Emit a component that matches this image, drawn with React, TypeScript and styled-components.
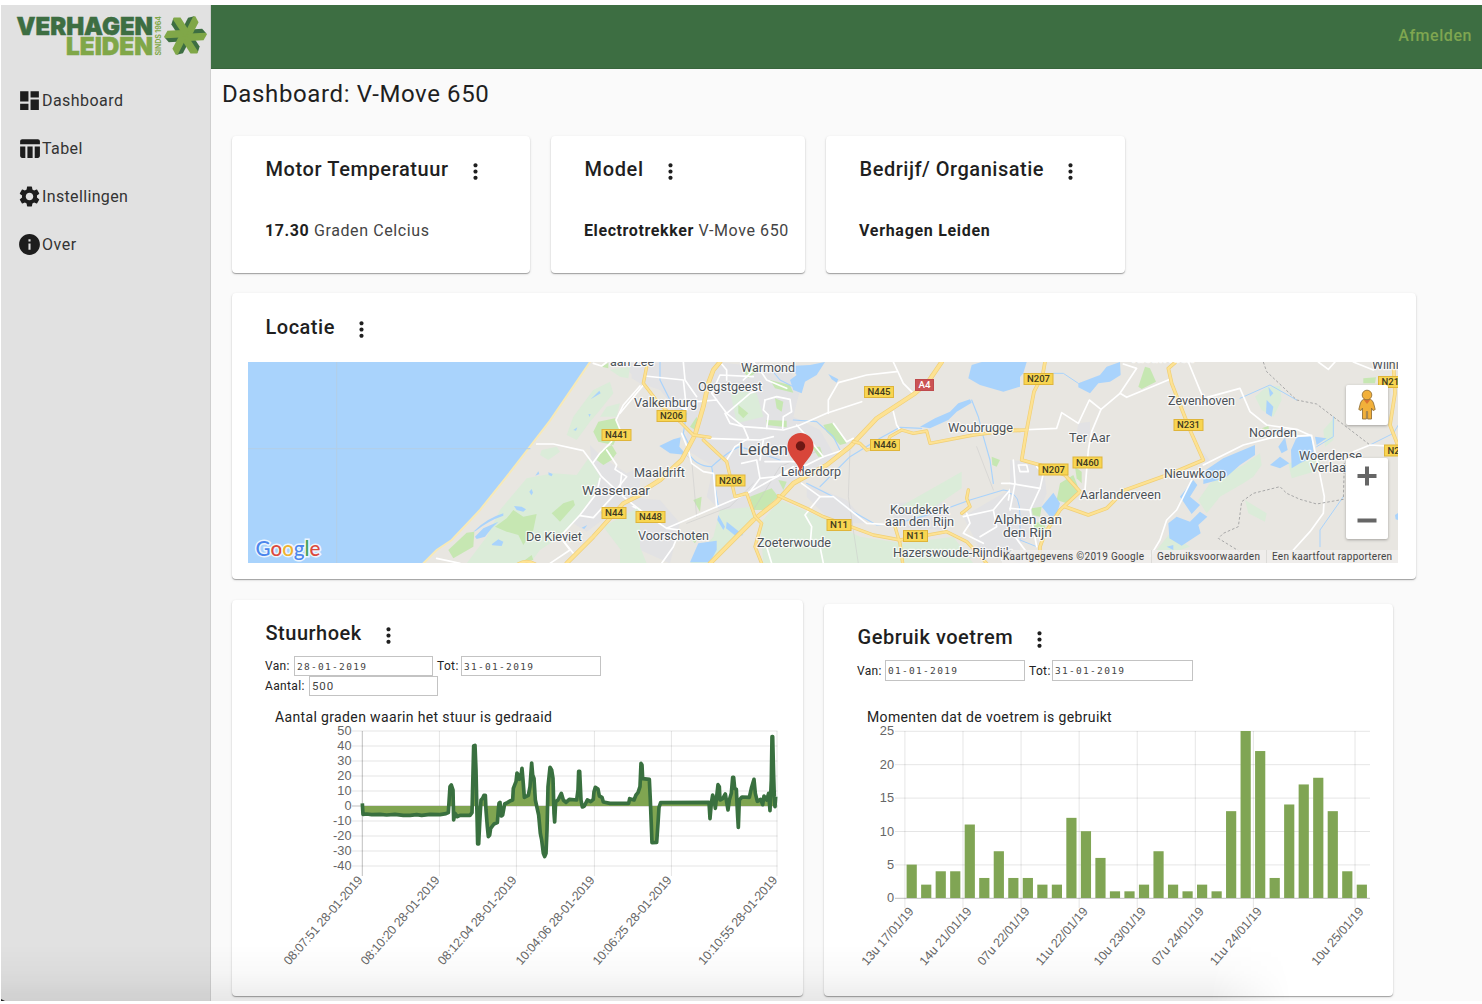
import React from "react";
import styled, { createGlobalStyle } from "styled-components";
import { MdDashboard, MdTableChart, MdSettings, MdInfo, MdMoreVert } from "react-icons/md";

const GlobalStyle = createGlobalStyle`
  * { box-sizing: border-box; }
  body { margin: 0; background: #fff; font-family: Roboto, "Liberation Sans", sans-serif; color: #1f1f1f; }
  h1, h2, p { margin: 0; }
`;

const Page = styled.div`
  position: relative;
  display: flex;
  width: 1482px;
  height: 1004px;
  padding: 5px 0 3px 1px;
  overflow: hidden;
`;
const Sidebar = styled.aside`
  width: 210px;
  background: #e1e1e1;
  border-right: 1px solid #cfcfcf;
  flex: none;
`;
const LogoWrap = styled.div`
  height: 71px;
  padding: 4px 0 0 9px;
  svg { display: block; }
`;
const Nav = styled.nav`
  display: flex;
  flex-direction: column;
`;
const NavItem = styled.a<{ $ls: number }>`
  display: flex;
  align-items: center;
  height: 48px;
  padding-left: 16px;
  font-size: 16px;
  letter-spacing: ${(p) => p.$ls}px;
  color: #333;
  svg { width: 25px; height: 25px; color: #1d1d1d; flex: none; }
`;
const Main = styled.main`
  flex: 1;
  display: flex;
  flex-direction: column;
  background: #fafafa;
`;
const TopBar = styled.header`
  height: 64px;
  flex: none;
  display: flex;
  align-items: center;
  justify-content: flex-end;
  padding: 0 10px 3px 0;
  background: #3d6e42;
  border-bottom: 1px solid #38653c;
`;
const SignOut = styled.a`
  color: #7fa650;
  font-size: 16px;
  font-weight: 500;
  letter-spacing: 0.55px;
`;
const Title = styled.h1`
  height: 67px;
  flex: none;
  padding: 11px 0 0 11px;
  font-size: 24px;
  line-height: 28px;
  font-weight: 400;
  letter-spacing: 0.62px;
`;
const Row = styled.div<{ $gapBelow?: number }>`
  display: flex;
  align-items: flex-start;
  flex: none;
  gap: 21px;
  padding-left: 21px;
  margin-bottom: ${(p) => p.$gapBelow ?? 20}px;
`;
const Card = styled.section<{ $w: number; $h: number; $top?: number }>`
  width: ${(p) => p.$w}px;
  height: ${(p) => p.$h}px;
  margin-top: ${(p) => p.$top ?? 0}px;
  flex: none;
  background: #fff;
  border-radius: 4px;
  box-shadow: 0 1px 1px rgba(0, 0, 0, 0.3), 0 1px 3px rgba(0, 0, 0, 0.12);
`;
const CardHead = styled.div<{ $h: number; $pt: number }>`
  display: flex;
  align-items: flex-start;
  gap: 14px;
  height: ${(p) => p.$h}px;
  padding: ${(p) => p.$pt}px 0 0 33.5px;
  svg { width: 25px; height: 25px; margin-top: 2px; }
`;
const CardTitle = styled.h2<{ $ls: number }>`
  font-size: 20px;
  line-height: 25px;
  font-weight: 500;
  letter-spacing: ${(p) => p.$ls}px;
  white-space: nowrap;
`;
const Fact = styled.p<{ $ls: number }>`
  padding: 16px 0 0 33px;
  font-size: 16px;
  line-height: 20px;
  letter-spacing: ${(p) => p.$ls}px;
  white-space: nowrap;
  color: #444;
  b { font-weight: 700; color: #1f1f1f; }
`;
const MapBox = styled.div`
  position: relative;
  width: 1150px;
  height: 201px;
  margin-left: 16px;
  overflow: hidden;
  svg { display: block; }
`;
const MapControl = styled.div<{ $top: number; $h: number }>`
  position: absolute;
  right: 10.5px;
  top: ${(p) => p.$top}px;
  width: 42px;
  height: ${(p) => p.$h}px;
  display: flex;
  flex-direction: column;
  align-items: center;
  justify-content: center;
  background: #fff;
  border-radius: 2px;
  box-shadow: 0 1px 3px rgba(0, 0, 0, 0.3);
`;
const Filters = styled.div<{ $h: number; $pt: number }>`
  height: ${(p) => p.$h}px;
  padding: ${(p) => p.$pt}px 0 0 33px;
`;
const FilterLine = styled.div<{ $h: number }>`
  display: flex;
  align-items: center;
  height: ${(p) => p.$h}px;
`;
const Label = styled.label<{ $w: number }>`
  width: ${(p) => p.$w}px;
  flex: none;
  font-size: 12px;
  letter-spacing: 0.35px;
  color: #222;
`;
const Field = styled.input<{ $w: number; $date?: boolean }>`
  width: ${(p) => p.$w}px;
  height: 100%;
  margin: 0;
  padding: 0 2px;
  border: 1px solid #c3c3c3;
  background: #fff;
  color: #444;
  font-family: ${(p) => (p.$date ? '"DejaVu Sans Mono", monospace' : "Roboto, sans-serif")};
  font-size: ${(p) => (p.$date ? 9.5 : 11.5)}px;
  letter-spacing: ${(p) => (p.$date ? 1.3 : 0.9)}px;
  outline: none;
`;
const ChartTitle = styled.p<{ $ls: number }>`
  height: 16px;
  padding-left: 43px;
  font-size: 14px;
  line-height: 16px;
  letter-spacing: ${(p) => p.$ls}px;
  color: #222;
`;
const ChartArea = styled.div`
  height: 260px;
  svg { display: block; }
`;
const BottomShade = styled.div`
  position: absolute;
  left: 1px;
  bottom: 3px;
  width: 1300px;
  height: 56px;
  pointer-events: none;
  background: linear-gradient(to bottom, rgba(0, 0, 0, 0), rgba(0, 0, 0, 0.025) 50%, rgba(0, 0, 0, 0.075));
  mask-image: linear-gradient(to right, #000 1210px, transparent 1290px);
`;
const Corner = styled.div`
  position: absolute;
  left: 1px;
  bottom: 3px;
  width: 4px;
  height: 2px;
  background: #222;
  clip-path: polygon(0 0, 100% 100%, 0 100%);
`;

/* Logo ---------------------------------------------------------------- */
const arms = [0, 60, 120, 180, 240, 300];
function Logo() {
  return (
    <svg width="200" height="54" viewBox="10 9 200 54" fontFamily="Inter, Roboto, sans-serif" fontWeight="900">
      <g strokeWidth=".5">
        <text x="16.500" y="35" fontSize="25" textLength="136.500" lengthAdjust="spacingAndGlyphs" fill="#3d6e42" stroke="#3d6e42">VERHAGEN</text>
        <text x="66" y="55" fontSize="25" textLength="87" lengthAdjust="spacingAndGlyphs" fill="#80a748" stroke="#80a748">LEIDEN</text>
      </g>
      <text transform="translate(160.500 55.500) rotate(-90)" fontSize="7.500" fontWeight="700" textLength="39.500" lengthAdjust="spacingAndGlyphs" fill="#80a748">SINDS 1964</text>
      <g transform="translate(185.500 35.500)">
        {arms.map((a) => (
          <path key={a} transform={`rotate(${a + 27})`} d="M0 0 L-5.800 -5 L-5.800 -17 L-1 -21 L3 -17 L3 -3 Z" fill="#3d6e42" />
        ))}
        {arms.map((a) => (
          <path key={a} transform={`rotate(${a + 27})`} d="M0 1 L-1.800 -5 L-1.800 -20.300 L0 -21.500 L5.600 -17.800 L5.600 -3 Z" fill="#80a748" />
        ))}
      </g>
    </svg>
  );
}

/* Map ----------------------------------------------------------------- */
type Pt = { t: string; x: number; y: number; w: number; s?: number };
const places: Pt[] = [
  { t: "aan Zee", x: 610, y: 366, w: 44 },
  { t: "Warmond", x: 741, y: 372, w: 54 },
  { t: "Oegstgeest", x: 698, y: 391, w: 64 },
  { t: "Valkenburg", x: 634, y: 407, w: 63 },
  { t: "Leiden", x: 739, y: 455, w: 49, s: 16 },
  { t: "Leiderdorp", x: 781, y: 476, w: 60 },
  { t: "Maaldrift", x: 634, y: 476.5, w: 51 },
  { t: "Wassenaar", x: 582, y: 495, w: 68, s: 13 },
  { t: "De Kieviet", x: 526, y: 541, w: 56 },
  { t: "Voorschoten", x: 638, y: 540, w: 71 },
  { t: "Zoeterwoude", x: 757, y: 547, w: 74 },
  { t: "Woubrugge", x: 948, y: 432, w: 65 },
  { t: "Koudekerk", x: 890, y: 514, w: 59 },
  { t: "aan den Rijn", x: 885, y: 526, w: 69 },
  { t: "Hazerswoude-Rijndijk", x: 893, y: 557, w: 119 },
  { t: "Alphen aan", x: 994, y: 524, w: 68, s: 13 },
  { t: "den Rijn", x: 1003, y: 537, w: 49, s: 13 },
  { t: "Ter Aar", x: 1069, y: 442, w: 41 },
  { t: "Aarlanderveen", x: 1080, y: 499, w: 81 },
  { t: "Nieuwkoop", x: 1164, y: 478, w: 62 },
  { t: "Zevenhoven", x: 1168, y: 405, w: 67 },
  { t: "Noorden", x: 1249, y: 437, w: 48 },
  { t: "Woerdense", x: 1299, y: 460, w: 63 },
  { t: "Verlaat", x: 1310, y: 472, w: 40 },
  { t: "Wilnis", x: 1372, y: 369, w: 33 },
  { t: "Nieuwveen", x: 1132, y: 362, w: 62 },
];
type Shield = { t: string; x: number; y: number; red?: boolean };
const shields: Shield[] = [
  { t: "N441", x: 616.5, y: 435 },
  { t: "N206", x: 671.5, y: 416 },
  { t: "N206", x: 730.5, y: 480.5 },
  { t: "N44", x: 614, y: 513 },
  { t: "N448", x: 650.5, y: 517 },
  { t: "N445", x: 879, y: 392 },
  { t: "A4", x: 924.5, y: 385, red: true },
  { t: "N446", x: 885, y: 445 },
  { t: "N11", x: 839, y: 525 },
  { t: "N11", x: 915.5, y: 536 },
  { t: "N207", x: 1038.5, y: 379 },
  { t: "N207", x: 1053.5, y: 469.5 },
  { t: "N460", x: 1087.5, y: 462.5 },
  { t: "N231", x: 1188.5, y: 425 },
  { t: "N212", x: 1393, y: 382 },
  { t: "N212", x: 1399, y: 450.5 },
];
const WATER = "#a9d3fc";
const PALE = "#dbecd9";
const LEAF = "#c6e7b2";
const TOWN = "#e2e2e4";

const west = {
  pale: [
    "M1060 120 L1110 95 L1120 130 L1080 180 L1050 215 L1010 270 L980 255 L1000 200 L1030 160Z",
    "M905 300 L950 290 L960 305 L925 330 L900 315Z",
    "M860 385 L940 370 L1010 375 L1045 325 L1080 380 L1050 450 L1000 520 L960 560 L900 600 L870 640 L680 640 L740 560 L780 480Z",
    "M1100 170 L1140 160 L1130 200 L1080 200Z",
    "M1110 60 L1170 50 L1165 85 L1140 80Z",
    "M1090 530 L1200 470 L1200 640 L1150 610Z",
  ],
  leaf: [
    "M1075 215 L1125 205 L1140 240 L1120 285 L1075 275 L1060 245Z",
    "M1085 300 L1115 285 L1130 310 L1115 330 L1090 345 L1070 330Z",
    "M765 530 L800 505 L820 480 L850 500 L890 492 L880 540 L850 585 L835 555 L800 545Z",
    "M625 600 L680 548 L703 545 L700 590 L640 625Z",
    "M935 490 L970 460 L1000 450 L1005 465 L960 515Z",
    "M1085 50 L1105 38 L1105 55Z",
    "M855 630 L875 615 L880 630Z",
  ],
  water: [
    "M705 560 L730 535 L775 515 L755 535 L735 560 L710 567Z",
    "M700 545 Q740 505 790 490 L790 497 Q745 512 707 543Z",
    "M755 583 L775 568 L790 575 L785 588 L757 586Z",
    "M822 468 L845 470 L858 478 L850 485 L830 480Z",
    "M868 425 L875 417 L879 428 L874 436Z",
    "M925 367 L938 372 L935 379 L926 375Z",
    "M886 377 L895 364 L898 372Z",
    "M1052 148 L1078 122 L1082 130Z",
    "M1000 240 L1012 232 L1008 242Z",
    "M1045 193 L1052 192 L1049 201Z",
    "M1025 533 L1042 525 L1033 537Z",
    "M1082 485 L1096 492 L1092 505Z",
  ],
  town: [
    "M1050 285 L1085 320 L1160 370 L1200 350 L1200 460 L1100 500 L1040 545 L1000 520 L1060 440Z",
    "M1175 38 L1200 38 L1200 100 L1175 85Z",
  ],
};
const mid = {
  town: [
    "M0 36 L290 36 L510 60 L540 120 L520 200 L600 240 L640 310 L680 300 L520 400 L470 440 L400 480 L320 500 L260 440 L280 350 L200 300 L200 220 L120 120 L60 100Z",
    "M0 440 L120 450 L180 520 L150 640 L60 600 L0 520Z",
    "M560 400 L680 450 L740 520 L640 520 L560 440Z",
    "M1030 500 L1080 470 L1200 400 L1200 640 L1080 600Z",
    "M820 460 L960 450 L990 500 L960 540 L820 530Z",
  ],
  pale: [
    "M420 520 L480 450 L620 510 L720 560 L850 580 L1000 560 L1060 640 L430 640Z",
    "M300 480 L400 470 L400 520 L270 640 L210 640 L280 560Z",
    "M840 470 L1025 365 L1025 415 L900 500Z",
    "M330 120 L410 130 L430 200 L350 220Z",
    "M0 600 L60 590 L80 640 L0 640Z",
  ],
  leaf: [
    "M390 440 L455 415 L475 440 L430 480 L400 480Z",
    "M610 225 L640 218 L680 280 L660 285 L620 245Z",
    "M438 210 L500 212 L500 232 L440 225Z",
    "M450 90 L510 105 L520 128 L465 115Z",
    "M370 60 L405 45 L410 65 L385 85Z",
    "M465 145 L490 155 L485 185 L470 175Z",
    "M355 165 L385 190 L370 205 L355 190Z",
    "M575 290 L600 290 L610 320 L595 320Z",
    "M210 230 L230 200 L235 225 L225 240Z",
    "M475 390 L500 395 L490 420Z",
    "M220 450 L245 440 L240 485Z",
    "M1115 320 L1140 330 L1130 350 L1117 345Z",
    "M205 560 L240 550 L225 580Z",
  ],
  water: [
    "M510 48 L570 45 L615 36 L590 75 L555 95 L545 130 L520 120 L510 90 L530 75Z",
    "M1055 45 L1085 36 L1200 36 L1200 110 L1150 125 L1080 105 L1045 85Z",
    "M625 72 L655 88 L650 98 L635 88Z",
    "M900 230 L945 205 L990 185 L1015 160 L1050 148 L1055 158 L1010 185 L985 210 L930 235Z",
    "M118 288 L160 268 L182 262 L178 290 L200 315 L150 310Z",
    "M235 580 L290 572 L290 600 L270 637 L210 637Z",
    "M295 495 L315 530 L310 540 L292 510Z",
    "M320 515 L370 555 L350 560 L318 535Z",
  ],
  streams: [
    "M120 36 L120 90 L150 150 L200 190 L190 250 L210 290",
    "M1055 150 L1075 200 L1090 260 L1110 330 L1120 400",
    "M200 300 Q225 350 275 350 Q330 300 360 290 L480 330",
    "M275 350 L295 470",
    "M520 210 L590 215 L640 260 L660 300",
    "M905 235 L840 232 L780 265 L690 320 L600 410",
    "M560 400 L640 440 L690 480 L770 525 L830 520 L940 490 L1050 450 L1150 420 L1200 430",
    "M455 60 L480 90 L520 110",
  ],
};
const east = {
  water: [
    "M0 36 L50 36 L40 70 L0 115Z",
    "M205 100 L270 75 L290 50 L330 36 L332 75 L300 95 L265 100 L240 130 L205 112Z",
    "M95 470 L130 428 L150 460 L140 495 L120 500Z",
    "M580 365 L640 325 L735 285 L735 315 L690 345 L645 385 L580 402Z",
    "M510 440 L550 390 L562 405 L540 440 L570 465 L545 492Z",
    "M475 520 L500 500 L540 515 L570 485 L592 500 L565 525 L572 550 L515 587 L478 565Z",
    "M805 290 L825 262 L833 300 L815 310Z",
    "M780 345 L810 320 L838 340 L810 355Z",
    "M843 300 L860 262 L905 258 L912 320 L870 340 L845 355Z",
    "M775 110 L790 130 L780 140Z",
    "M770 150 L790 170 L785 200 L768 190Z",
    "M915 260 L950 265 L920 285Z",
    "M1155 495 L1165 488 L1165 510 L1157 508Z",
    "M470 590 L490 585 L490 600Z",
    "M795 238 L850 245 L800 250Z",
  ],
  pale: [
    "M735 140 L770 110 L810 108 L815 150 L790 200 L755 180Z",
    "M600 400 L700 345 L750 310 L755 345 L730 380 L700 400 L630 440 L590 490 L565 450Z",
    "M940 240 L975 200 L970 270 L945 290Z",
    "M705 450 L770 490 L765 515 L715 490Z",
    "M835 340 L930 320 L930 360 L845 385Z",
    "M440 600 L480 550 L540 590 L480 610Z",
  ],
  leaf: [
    "M385 110 L405 50 L420 55 L438 95 L395 117Z",
    "M150 400 L190 375 L210 425 L170 460 L140 450Z",
    "M195 350 L215 365 L215 400 L200 385Z",
    "M65 475 L95 470 L90 500 L68 495Z",
    "M1060 85 L1098 82 L1095 100 L1060 100Z",
    "M755 235 L775 228 L778 240Z",
    "M65 520 L100 515 L110 545 L75 540Z",
  ],
  town: [
    "M0 330 L100 340 L110 430 L60 560 L0 600Z",
    "M205 220 L240 215 L240 260 L200 250Z",
    "M575 300 L600 330 L590 350Z",
  ],
};
const P = ({ list, fill }: { list: string[]; fill: string }) => (
  <>
    {list.map((d) => (
      <path key={d} d={d} fill={fill} />
    ))}
  </>
);
const Roads = ({ list, w = 5, c = "#fff" }: { list: string[]; w?: number; c?: string }) => (
  <g fill="none" stroke={c} strokeWidth={w} strokeLinejoin="round" strokeLinecap="round">
    {list.map((d) => (
      <path key={d} d={d} />
    ))}
  </g>
);
const Highways = ({ list, w = 8 }: { list: string[]; w?: number }) => (
  <>
    <Roads list={list} w={w + 3} c="#f0cf76" />
    <Roads list={list} w={w - 1} c="#fde293" />
  </>
);

function DutchMap() {
  return (
    <svg width="1150" height="201" viewBox="248 362 1150 201" fontFamily="Roboto, sans-serif">
      <rect x="248" y="362" width="1150" height="201" fill="#e8e6e1" />
      <g transform="translate(620 350) scale(.33333)">
        <P list={mid.town} fill={TOWN} />
        <P list={mid.pale} fill={PALE} />
        <P list={mid.leaf} fill={LEAF} />
        <P list={mid.water} fill={WATER} />
        <Roads list={mid.streams} w={3.5} c={WATER} />
        <Roads w={1.5} c="#c9c9c9" list={["M690 300 L685 440 L715 640", "M230 500 L215 330 L180 300", "M400 480 L480 350 L600 300", "M200 520 L330 470 L400 400", "M1070 290 L1120 420"]} />
        <Roads
          list={[
            "M75 78 L190 90 L200 180 L150 160", "M190 36 L195 90 L230 140", "M0 190 L70 105", "M230 155 L290 150 L320 190 L390 130 L420 120",
            "M290 150 L275 130 L300 75 L400 80", "M320 190 L370 230 L440 235 L490 240 L540 225 L620 190 L725 155",
            "M625 190 L625 150 L655 98 L740 75 L830 65", "M820 36 L850 100 L880 130", "M820 185 L830 225 L840 240",
            "M435 150 L470 140 L510 148 L515 185 L490 200 L488 235", "M435 150 L430 180 L445 195 L440 235",
            "M260 265 L350 268 L420 270 L460 260", "M370 230 L385 265 L345 290 L320 330", "M530 225 L570 270 L610 320 L670 300",
            "M610 320 L560 345 L480 375 L390 425 L350 445 L290 470 L220 500 L140 535 L60 480 L0 450",
            "M205 300 L215 340 L250 365 L280 370 L290 470", "M365 340 L410 330 L420 385 L390 425", "M420 330 L430 270",
            "M420 385 L470 380 L520 350", "M185 250 L205 300", "M640 220 L680 275 L700 265", "M435 335 L540 335",
            "M400 36 L420 60 L440 90 L500 115", "M395 65 L370 90", "M315 190 L330 220 L370 230",
            "M545 400 L600 440 L555 495 L575 530 L570 590", "M600 440 L640 440 L690 480 L740 520 L830 525",
            "M140 535 L180 540 L160 590 L125 640", "M600 590 L610 640", "M440 590 L455 640", "M1030 500 L1120 480 L1170 420 L1200 400",
            "M1040 490 L1050 520 L1030 550 L1090 580", "M1120 480 L1130 530 L1080 560", "M1145 400 L1200 400", "M1180 340 L1175 400 L1165 450",
            "M300 36 L320 60 L320 90", "M0 370 L20 385 L0 400",
          ]}
        />
        <Highways
          w={11}
          list={[
            "M300 36 L280 60 L265 100 L250 170 L225 255 L185 330 L120 390 L0 465",
            "M965 36 L925 95 L885 130 L770 205 L690 290 L620 345 L520 400 L470 455 L400 510 L270 640",
          ]}
        />
        <Highways
          w={7}
          list={[
            "M80 50 L70 100 L120 165 L180 215 L220 255 L270 262", "M250 270 L320 335 L345 440 L380 430 L405 500 L425 520 L405 590 L425 640",
            "M475 437 L560 475 L610 500 L760 555 L840 570 L980 545 L1040 575 L1100 640", "M825 530 L840 580 L848 640",
            "M700 275 L720 280 L740 300 L800 285 L810 260 L845 240 L880 250 L920 243 L930 280 L1060 255 L1180 240 L1200 242",
            "M1045 420 L1040 445 L1050 470 L1025 490",
          ]}
        />
      </g>
      <g transform="translate(240 350) scale(.33333)">
        <P list={west.town} fill={TOWN} />
        <P list={west.pale} fill={PALE} />
        <P list={west.leaf} fill={LEAF} />
        <P list={west.water} fill={WATER} />
        <path d="M20 30 H1054 L1010 95 L930 212 L875 283 L800 380 L720 480 L635 570 L590 600 L540 650 H20Z" fill={WATER} />
        <path d="M1054 30 L1010 95 L930 212 L875 283 L800 380 L720 480 L635 570 L590 600 L540 650" fill="none" stroke="#f7e9b7" strokeWidth="6" />
        <Roads list={["M290 36 V640", "M24 296 H870"]} w={3} c="#b3cfe6" />
        <Roads
          list={[
            "M890 282 L940 282 L1030 302 L1058 340 L1085 380 L1150 440 L1200 480", "M1058 340 L1080 310 L1115 275", "M1100 300 L1130 345 L1125 358 L1160 380 L1120 430",
            "M1200 108 L1150 165 L1128 210 L1145 250", "M1080 385 L1070 430 L1020 495 L960 560 L990 600 L930 640", "M1020 497 L1060 503 L1140 415 L1145 370",
            "M960 560 L1000 610", "M590 625 L660 640", "M1060 40 L1085 48 L1100 36",
          ]}
        />
        <Highways w={10} list={["M980 640 L1060 560 L1150 460 L1200 435"]} />
        <Highways w={8} list={["M835 642 Q860 628 885 642"]} />
      </g>
      <g transform="translate(1010 350) scale(.33333)">
        <P list={east.town} fill={TOWN} />
        <P list={east.pale} fill={PALE} />
        <P list={east.leaf} fill={LEAF} />
        <P list={east.water} fill={WATER} />
        <Roads
          list={["M130 70 L160 70 L205 100", "M690 145 L780 105 L860 150", "M1080 285 L1150 250 L1165 225", "M930 590 L930 540 L1000 440", "M970 200 L970 260 L920 290", "M0 430 Q30 430 30 500 L30 570 L80 590"]}
          w={3}
          c={WATER}
        />
        <Roads
          list={[
            "M30 240 L140 235 L155 188 L205 220 L238 150 L273 178 L245 245 L235 300 L225 420", "M273 178 L330 130 L380 55 L340 42", "M330 130 L350 142 L480 88",
            "M535 36 L580 145 L690 115 L720 185 L770 225 L860 238 L905 258 L925 350 L943 440 L940 490 L900 545 L850 600",
            "M580 345 L700 285 L790 262 L905 256", "M545 390 L500 480 L470 510 L450 570 L420 620", "M0 400 L90 415 L60 480 L80 590", "M10 330 L15 400 L0 480",
            "M80 350 L100 370 L90 415", "M0 475 L60 480", "M0 540 L60 620", "M925 36 L955 58 L975 36", "M1030 36 L1090 60", "M1030 305 L1080 285 L1165 290", "M25 345 L50 345 L55 365 L30 365Z",
          ]}
        />
        <Highways
          w={8}
          list={[
            "M105 36 L98 75 L72 125 L50 240 L35 330 L90 345 L165 375 L210 425 L150 480 L105 550 L90 590 L90 640",
            "M0 242 L50 240", "M495 38 L475 55 L485 100 L540 240 L580 330 L480 372 L340 422 L310 455 L290 475 L235 495 L165 470", "M1150 36 L1155 130 L1140 225 L1165 290",
          ]}
        />
        <g fill="none" stroke="#a8a8a8" strokeWidth="3" strokeDasharray="8 6">
          <path d="M760 36 L770 65 L860 150 L920 162 L1080 285" />
          <path d="M690 605 L625 565 L640 550 L685 530 L695 455 L730 430 L810 410 L830 430 L870 448 L920 462 L1000 448 L1003 340" />
        </g>
      </g>
      <g fill="#4c5258" stroke="#fff" strokeOpacity=".75" strokeWidth="2.4" paintOrder="stroke" strokeLinejoin="round">
        {places.map((p) => (
          <text key={p.t} x={p.x} y={p.y} fontSize={p.s ?? 12} textLength={p.w} lengthAdjust="spacingAndGlyphs">
            {p.t}
          </text>
        ))}
      </g>
      {shields.map((s, i) => {
        const w = s.red ? 18 : s.t.length > 3 ? 29 : 24;
        return (
          <g key={i}>
            <rect x={s.x - w / 2} y={s.y - 5.5} width={w} height="11" fill={s.red ? "#cb5354" : "#f8d551"} stroke={s.red ? "#bf4a4c" : "#dfb53a"} />
            <text x={s.x} y={s.y + 3.4} fontSize="9.2" fontWeight="500" textAnchor="middle" textLength={w - 6} lengthAdjust="spacingAndGlyphs" fill={s.red ? "#fff" : "#3e3a20"}>
              {s.t}
            </text>
          </g>
        );
      })}
      <path d="M800.5 474 C799.5 462 787.5 458 787.5 446 a13 13 0 0 1 26 0 C813.5 458 801.5 462 800.5 474Z" fill="#d8463a" />
      <circle cx="800.5" cy="446" r="4.7" fill="#6d1814" />
      <rect x="1002" y="550" width="396" height="13" fill="#f0efed" fillOpacity=".8" />
      <path d="M1151.500 550V563M1266.500 550V563" stroke="#dddcd9" />
      <g fontSize="10" fill="#444">
        <text x="1003" y="559.5" textLength="141" lengthAdjust="spacing">Kaartgegevens ©2019 Google</text>
        <text x="1157" y="559.5" textLength="103" lengthAdjust="spacing">Gebruiksvoorwaarden</text>
        <text x="1272" y="559.5" textLength="120" lengthAdjust="spacing">Een kaartfout rapporteren</text>
      </g>
      <text x="255.500" y="556" fontSize="20.5" fontFamily="Lato, sans-serif" fontWeight="500" textLength="65" lengthAdjust="spacingAndGlyphs" stroke="#fff" strokeWidth="3" strokeOpacity=".8" paintOrder="stroke">
        <tspan fill="#4c86ec">G</tspan><tspan fill="#dc4a3d">o</tspan><tspan fill="#efb32f">o</tspan><tspan fill="#4c86ec">g</tspan><tspan fill="#43a154">l</tspan><tspan fill="#dc4a3d">e</tspan>
      </text>
    </svg>
  );
}

function Pegman() {
  return (
    <svg width="20" height="32" viewBox="0 0 20 32">
      <path d="M6.500 10.500 L13.500 10.500 Q15.500 11 16.500 14 L18.200 20.500 L16 21.500 L14.500 19 V30 H10.600 V22.500 H9.400 V30 H5.500 V19 L4 21.500 L1.800 20.500 L3.500 14 Q4.500 11 6.500 10.500Z" fill="#f2b03a" stroke="#94733a" strokeWidth=".9" />
      <path d="M6.500 10.500 L10 15 L13.500 10.500Z" fill="#dd7430" />
      <circle cx="10" cy="6" r="4.800" fill="#f2b03a" stroke="#94733a" strokeWidth=".9" />
    </svg>
  );
}

/* Charts -------------------------------------------------------------- */
const AXIS_FONT = '"Liberation Sans", Arial, sans-serif';
const steerTicks = [
  { x: 362.3, t: "08:07:51 28-01-2019" },
  { x: 439.4, t: "08:10:20 28-01-2019" },
  { x: 516.4, t: "08:12:04 28-01-2019" },
  { x: 594.4, t: "10:04:06 28-01-2019" },
  { x: 671.4, t: "10:06:25 28-01-2019" },
  { x: 777, t: "10:10:55 28-01-2019" },
];
const steerLine =
  "277,250 279,283 290,282 305,284 330,283 350,285 375,283 400,286 420,286 440,284 455,286 480,283 510,284 528,281 535,278 540,200 544,195 549,210 551,300 555,280 562,290 570,286 600,286 606,278 609,160 611,78 615,76 618,150 623,372 626,372 629,310 633,240 638,235 642,226 646,226 648,270 652,320 655,350 659,345 662,325 672,312 682,308 685,270 687,250 690,247 694,288 698,285 704,252 712,248 722,242 728,240 730,205 738,185 741,159 745,165 748,178 752,175 756,145 759,180 763,232 775,226 780,200 785,129 788,165 792,175 796,240 806,285 811,340 815,360 820,400 824,410 828,400 831,330 834,200 840,142 845,150 849,175 852,280 854,306 857,245 864,240 874,220 880,240 888,247 898,238 920,240 924,210 926,154 929,154 933,240 937,261 943,258 952,240 962,245 970,238 972,215 976,202 984,207 988,228 996,232 1000,246 1020,250 1076,250 1079,236 1092,240 1098,225 1104,218 1110,200 1113,130 1116,135 1118,176 1138,178 1141,240 1146,368 1160,367 1164,310 1167,262 1172,248 1317,247 1320,296 1324,250 1328,225 1333,240 1336,265 1340,230 1344,194 1348,200 1350,240 1358,236 1366,222 1374,270 1378,240 1384,220 1388,172 1391,172 1394,205 1399,208 1403,290 1405,322 1408,240 1416,231 1438,232 1444,205 1452,178 1456,220 1462,244 1472,238 1478,254 1482,228 1490,240 1496,220 1500,272 1504,180 1506,50 1508,50 1511,170 1513,230 1515,260 1517,230";

function SteeringChart() {
  return (
    <svg width="571" height="260" viewBox="232 725 571 260" fontFamily={AXIS_FONT} fontSize="12.500" fill="#666">
      {[50, 40, 30, 20, 10, 0, -10, -20, -30, -40].map((v) => (
        <g key={v}>
          <path d={`M352 ${806 - v * 1.5}H777.500`} stroke="#000" strokeOpacity={v === 0 ? 0.25 : 0.1} />
          <text x="351.500" y={809.9 - v * 1.5} textAnchor="end" fontSize="12.800">{v}</text>
        </g>
      ))}
      {steerTicks.map((k, i) => (
        <g key={k.t}>
          <path d={`M${k.x} 731V876`} stroke="#000" strokeOpacity={i === 0 ? 0.25 : 0.1} />
          <text transform={`translate(${k.x + 1} 880.500) rotate(-49)`} textAnchor="end" textLength="113">{k.t}</text>
        </g>
      ))}
      <g transform="translate(270 720) scale(.33333)">
        <polygon points={`277,258 ${steerLine} 1517,258`} fill="#80a551" />
        <polyline points={steerLine} fill="none" stroke="#39703f" strokeWidth="11" strokeLinejoin="round" strokeLinecap="butt" />
      </g>
    </svg>
  );
}

const brakes = [5, 2, 4, 4, 11, 3, 7, 3, 3, 2, 2, 12, 10, 6, 1, 1, 2, 7, 2, 1, 2, 1, 13, 25, 22, 3, 14, 17, 18, 13, 4, 2];
const brakeTicks = [
  { i: 0, t: "13u 17/01/19" },
  { i: 4, t: "14u 21/01/19" },
  { i: 8, t: "07u 22/01/19" },
  { i: 12, t: "11u 22/01/19" },
  { i: 16, t: "10u 23/01/19" },
  { i: 20, t: "07u 24/01/19" },
  { i: 24, t: "11u 24/01/19" },
  { i: 31, t: "10u 25/01/19" },
];
function BrakeChart() {
  const step = 14.52;
  return (
    <svg width="569" height="260" viewBox="824 725 569 260" fontFamily={AXIS_FONT} fontSize="12.500" fill="#666">
      {[0, 5, 10, 15, 20, 25].map((v) => (
        <g key={v}>
          <path d={`M895 ${898.3 - v * 6.68}H1370`} stroke="#000" strokeOpacity={v === 0 ? 0.25 : 0.1} />
          <text x="894" y={902.3 - v * 6.68} textAnchor="end" fontSize="12.800">{v}</text>
        </g>
      ))}
      {brakeTicks.map((k) => (
        <g key={k.t}>
          <path d={`M${904.9 + k.i * step} 731V908`} stroke="#000" strokeOpacity=".1" />
          <text transform={`translate(${914.2 + k.i * step} 911.800) rotate(-49)`} textAnchor="end" textLength="72">{k.t}</text>
        </g>
      ))}
      {brakes.map((v, i) => (
        <rect key={i} x={906.6 + i * step} y={898 - v * 6.68} width="10.200" height={v * 6.68} fill="#80a554" />
      ))}
    </svg>
  );
}

function Head({ title, ls, h = 69, pt = 21 }: { title: string; ls: number; h?: number; pt?: number }) {
  return (
    <CardHead $h={h} $pt={pt}>
      <CardTitle $ls={ls}>{title}</CardTitle>
      <MdMoreVert />
    </CardHead>
  );
}

export default function App() {
  return (
    <Page>
      <GlobalStyle />
      <Sidebar>
        <LogoWrap><Logo /></LogoWrap>
        <Nav>
          <NavItem $ls={0.45}><MdDashboard />Dashboard</NavItem>
          <NavItem $ls={0.4}><MdTableChart />Tabel</NavItem>
          <NavItem $ls={0.35}><MdSettings />Instellingen</NavItem>
          <NavItem $ls={0.5}><MdInfo />Over</NavItem>
        </Nav>
      </Sidebar>
      <Main>
        <TopBar><SignOut>Afmelden</SignOut></TopBar>
        <Title>Dashboard: V-Move 650</Title>
        <Row>
          <Card $w={298} $h={137}>
            <Head title="Motor Temperatuur" ls={0.6} />
            <Fact $ls={0.6}><b>17.30</b> Graden Celcius</Fact>
          </Card>
          <Card $w={254} $h={137}>
            <Head title="Model" ls={0.65} />
            <Fact $ls={0.6}><b>Electrotrekker</b> V-Move 650</Fact>
          </Card>
          <Card $w={299} $h={137}>
            <Head title="Bedrijf/ Organisatie" ls={0.52} />
            <Fact $ls={0.7}><b>Verhagen Leiden</b></Fact>
          </Card>
        </Row>
        <Row $gapBelow={21}>
          <Card $w={1184} $h={286}>
            <Head title="Locatie" ls={0.5} pt={22} />
            <MapBox>
              <DutchMap />
              <MapControl $top={23} $h={40}><Pegman /></MapControl>
              <MapControl $top={96} $h={81}>
                <svg width="42" height="81" viewBox="0 0 42 81" stroke="#666" strokeWidth="4">
                  <path d="M11.500 18H30.500M21 8.500V27.500M11.500 62.500H30.500" />
                </svg>
              </MapControl>
            </MapBox>
          </Card>
        </Row>
        <Row>
          <Card $w={571} $h={396}>
            <Head title="Stuurhoek" ls={0.5} h={56} />
            <Filters $h={53} $pt={0}>
              <FilterLine $h={20}>
                <Label $w={29}>Van:</Label>
                <Field $w={139} $date readOnly defaultValue="28-01-2019" />
                <Label as="span" $w={4} />
                <Label $w={24}>Tot:</Label>
                <Field $w={140} $date readOnly defaultValue="31-01-2019" />
              </FilterLine>
              <FilterLine $h={20}>
                <Label $w={44}>Aantal:</Label>
                <Field $w={129} readOnly defaultValue="500" />
              </FilterLine>
            </Filters>
            <ChartTitle $ls={0.36}>Aantal graden waarin het stuur is gedraaid</ChartTitle>
            <ChartArea><SteeringChart /></ChartArea>
          </Card>
          <Card $w={569} $h={392} $top={4}>
            <Head title="Gebruik voetrem" ls={0.52} h={55} />
            <Filters $h={50} $pt={1}>
              <FilterLine $h={21}>
                <Label $w={28}>Van:</Label>
                <Field $w={140} $date readOnly defaultValue="01-01-2019" />
                <Label as="span" $w={4} />
                <Label $w={23}>Tot:</Label>
                <Field $w={141} $date readOnly defaultValue="31-01-2019" />
              </FilterLine>
            </Filters>
            <ChartTitle $ls={0.36}>Momenten dat de voetrem is gebruikt</ChartTitle>
            <ChartArea><BrakeChart /></ChartArea>
          </Card>
        </Row>
      </Main>
      <BottomShade />
      <Corner />
    </Page>
  );
}
